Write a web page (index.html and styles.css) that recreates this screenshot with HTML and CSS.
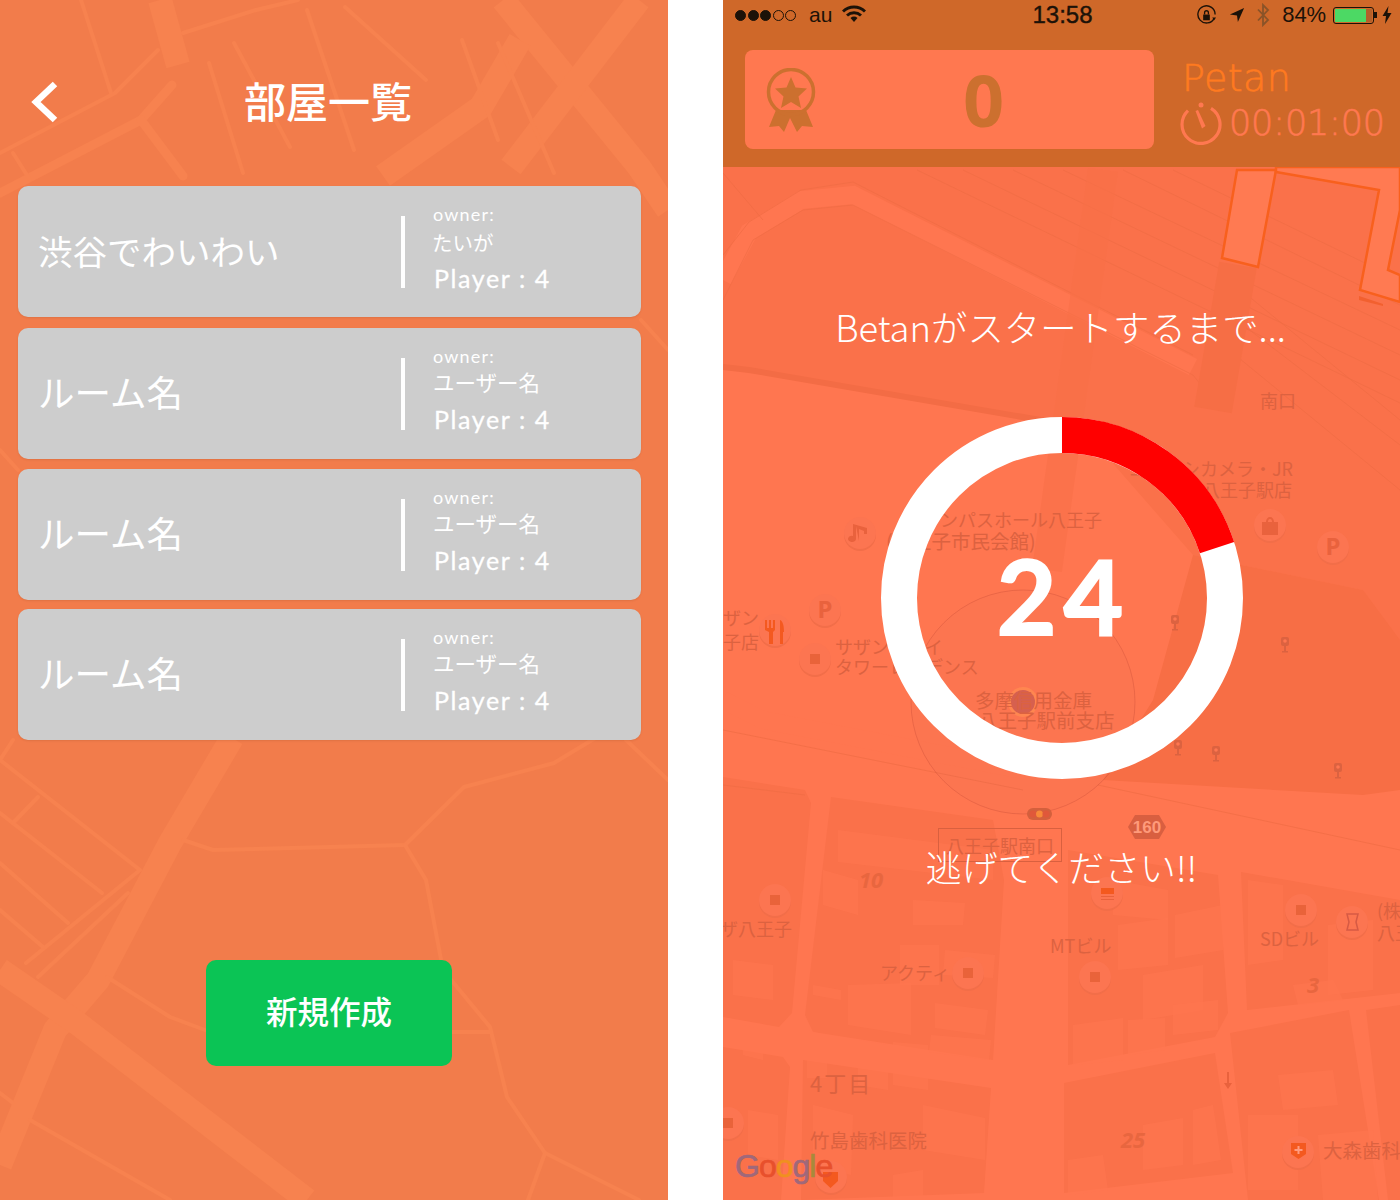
FILE: index.html
```html
<!DOCTYPE html>
<html lang="ja">
<head>
<meta charset="utf-8">
<title>Betan</title>
<link rel="stylesheet" href="styles.css">
</head>
<body>
<main class="screens">

<section class="rooms">
  <svg class="map" viewBox="0 0 668 1200" aria-hidden="true">
    <g class="road-wide">
      <path d="M160 0L178 65"/>
      <path d="M503 0L639 167L668 210"/>
      <path d="M639 0L511 167"/>
      <path d="M383 176L481 107L520 40"/>
      <path d="M232 738L170 843L98 980L55 1030L0 1165"/>
      <path d="M0 970L77 1023L307 1200"/>
    </g>
    <g class="road-mid">
      <path d="M0 193L141 120L172 85"/>
      <path d="M141 120L183 176"/>
    </g>
    <g class="road-thin">
      <path d="M0 153L115 93L158 50"/>
      <path d="M183 33L256 10L298 0"/>
      <path d="M81 0L111 93"/>
      <path d="M209 63L243 173"/>
      <path d="M234 43L290 147"/>
      <path d="M307 10L354 150"/>
      <path d="M345 7L426 80"/>
      <path d="M462 40L498 140"/>
      <path d="M498 43L554 173"/>
      <path d="M13 153L30 180"/>
      <path d="M641 320L668 350"/>
      <path d="M0 450L18 470"/>
      <path d="M13 740L0 760L140 870L26 963"/>
      <path d="M0 813L102 893"/>
      <path d="M0 863L68 923"/>
      <path d="M0 910L43 947"/>
      <path d="M128 893L38 977"/>
      <path d="M38 797L13 823"/>
      <path d="M183 840L213 850L405 845L464 787L554 763L597 737"/>
      <path d="M405 845L426 880L443 970L490 1027L507 1097L545 1153L639 1200"/>
      <path d="M545 1153L528 1200"/>
      <path d="M107 977L170 1017L205 1030"/>
      <path d="M452 1032L490 1032"/>
      <path d="M30 1120L170 1200"/>
      <path d="M0 1093L13 1103"/>
      <path d="M626 740L668 780"/>
    </g>
  </svg>

  <header class="rooms-head">
    <svg class="back" viewBox="0 0 30 44" aria-label="戻る"><path d="M25 4L6 22L25 40"/></svg>
    <h1 class="rooms-title">部屋一覧</h1>
  </header>

  <ul class="room-list">
    <li class="room">
      <span class="room-name room-name-long">渋谷でわいわい</span>
      <div class="room-info">
        <span class="owner">owner:</span>
        <span class="owner-name">たいが</span>
        <span class="players">Player : 4</span>
      </div>
    </li>
    <li class="room">
      <span class="room-name">ルーム名</span>
      <div class="room-info">
        <span class="owner">owner:</span>
        <span class="owner-name owner-name-wide">ユーザー名</span>
        <span class="players">Player : 4</span>
      </div>
    </li>
    <li class="room">
      <span class="room-name">ルーム名</span>
      <div class="room-info">
        <span class="owner">owner:</span>
        <span class="owner-name owner-name-wide">ユーザー名</span>
        <span class="players">Player : 4</span>
      </div>
    </li>
    <li class="room">
      <span class="room-name">ルーム名</span>
      <div class="room-info">
        <span class="owner">owner:</span>
        <span class="owner-name owner-name-wide">ユーザー名</span>
        <span class="players">Player : 4</span>
      </div>
    </li>
  </ul>

  <button class="create">新規作成</button>
</section>

<section class="game">
  <svg class="map" viewBox="0 0 677 1200" aria-hidden="true">
    <defs>
      <g id="stop"><rect x="-4" y="-7" width="8" height="9" rx="2"/><circle r="1.8" cy="-3" class="hole"/><rect x="-1" y="2" width="2" height="6"/><rect x="-3" y="7" width="6" height="1.5"/></g>
      <g id="pin"><circle r="16" cy="1" class="pin-shadow"/><circle r="16" class="pin-bg"/></g>
    </defs>

    <path class="block" d="M0 167H677V650L640 590L470 555L358 427L26 370L0 367Z"/>
    <path class="block-deep" d="M470 555L640 590L677 640V790L640 795L380 780L430 700Z"/>
    <path class="block" d="M0 777L82 790L88 803L69 1013L56 1027L0 1017Z"/>
    <path class="block" d="M108 797L270 820L281 880L270 1060L90 1032L82 1015Z"/>
    <path class="block" d="M345 850L495 875L505 1013L492 1037L345 1065Z"/>
    <path class="block" d="M518 872L677 900V993L524 1010Z"/>
    <path class="block" d="M80 1060L268 1088L261 1193L78 1200Z"/>
    <path class="block" d="M0 1047L60 1057L67 1067L58 1200H0Z"/>
    <path class="block" d="M341 1083L492 1053L510 1173L341 1193Z"/>
    <path class="block" d="M507 1033L626 1010L656 1200H525Z"/>
    <path class="block" d="M643 1010L677 1005V1200H665Z"/>

    <g class="bldg">
      <path d="M190 900L242 903L240 925L190 925Z"/><path d="M222 950L272 955L270 978L220 975Z"/>
      <path d="M177 945L216 945V985H177Z"/><path d="M125 985L188 983V1035L125 1025Z"/>
      <path d="M90 985L118 990V1000L90 995Z"/><path d="M84 1030L104 1035V1078H84Z"/>
      <path d="M135 1040L165 1045V1090L135 1085Z"/><path d="M170 1042L205 1045V1090L170 1085Z"/>
      <path d="M212 1003L265 1010L262 1035L212 1028Z"/><path d="M208 1035L268 1040L266 1060L206 1052Z"/>
      <path d="M115 830L270 850V880L115 862Z"/><path d="M100 870L135 880V915L100 905Z"/>
      <path d="M395 925L445 918V965L395 970Z"/><path d="M452 915L500 905V950L452 958Z"/>
      <path d="M420 975L480 965V1010L420 1020Z"/><path d="M350 1025L400 1018V1060L350 1065Z"/>
      <path d="M405 1020L442 1018V1050L405 1055Z"/><path d="M450 1005L495 1000V1030L450 1035Z"/>
      <path d="M390 880L445 890V920L390 915Z"/><path d="M525 880L560 885V960L525 965Z"/>
      <path d="M570 985L610 980L620 1000L575 1005Z"/><path d="M605 925L650 920V990L605 995Z"/>
      <path d="M10 960L50 965V1000L10 995Z"/><path d="M20 1025L40 1030V1060L20 1055Z"/>
      <path d="M25 1110L55 1115V1160L25 1155Z"/><path d="M200 1105L262 1118V1160L200 1150Z"/>
      <path d="M170 1175L200 1170V1200H170Z"/><path d="M90 1105L130 1115L128 1175L90 1165Z"/>
      <path d="M420 1125L460 1118V1165L420 1170Z"/><path d="M470 1110L490 1105L498 1160L470 1165Z"/>
      <path d="M345 1160L380 1155L385 1190L345 1195Z"/><path d="M555 1075L610 1070L615 1105L560 1110Z"/>
      <path d="M525 1115L575 1115V1190H525Z"/><path d="M595 1135L650 1130L655 1200H600Z"/>
    </g>

    <g class="road-light">
      <path d="M0 280L26 232L78 200L130 195L470 367"/>
      <path d="M0 700L40 720L300 770"/>
    </g>
    <g class="rail">
      <path d="M194 170L677 403"/><path d="M240 170L677 380"/><path d="M290 170L677 355"/>
      <path d="M340 170L677 330"/><path d="M400 170L677 305"/><path d="M450 170L677 280"/>
      <path d="M518 290L677 420"/><path d="M520 325L677 445"/><path d="M500 345L677 490"/>
      <path d="M0 173L40 220"/><path d="M0 300L30 240L80 210L130 205L470 375L490 400"/>
      <path d="M0 255L26 222L78 190L130 182L470 355"/>
      <path d="M0 730L300 790"/><path d="M0 785L82 795"/><path d="M375 785L677 850"/>
    </g>
    <path class="dark-line" d="M0 367L26 370L358 427"/>
    <path class="dark-band" d="M515 265L490 410"/>
    <path class="dark-band2" d="M380 170L324 570"/>

    <path class="platform" d="M514 170H553L535 267L499 258Z"/>
    <path class="platform" d="M553 172L656 190L637 290L677 302V275L665 270L677 210V167H553Z"/>
    <path class="platform-edge" d="M636 296L660 304V306L636 300Z"/>

    <circle class="accuracy" cx="300" cy="702" r="112"/>
    <circle class="me-halo" cx="300" cy="702" r="15"/>
    <circle class="me" cx="300" cy="702" r="12"/>

    <use href="#pin" x="137" y="533"/><use href="#pin" x="547" y="525"/><use href="#pin" x="610" y="547"/>
    <use href="#pin" x="102" y="610"/><use href="#pin" x="52" y="630"/><use href="#pin" x="92" y="659"/>
    <use href="#pin" x="52" y="900"/><use href="#pin" x="245" y="973"/><use href="#pin" x="372" y="977"/>
    <use href="#pin" x="578" y="910"/><use href="#pin" x="629" y="922"/><use href="#pin" x="5" y="1123"/>
    <use href="#pin" x="384" y="893"/><use href="#pin" x="108" y="1177"/><use href="#pin" x="575" y="1152"/>

    <g class="sq">
      <rect x="87" y="654" width="10" height="10"/><rect x="47" y="895" width="10" height="10"/>
      <rect x="240" y="968" width="10" height="10"/><rect x="367" y="972" width="10" height="10"/>
      <rect x="573" y="905" width="10" height="10"/><rect x="0" y="1118" width="10" height="10"/>
    </g>
    <g class="stops">
      <use href="#stop" x="452" y="622"/><use href="#stop" x="562" y="644"/><use href="#stop" x="455" y="747"/>
      <use href="#stop" x="493" y="753"/><use href="#stop" x="615" y="770"/>
    </g>

    <path class="glyph" d="M133 526L133 539A4 3 0 1 1 130 536V524L144 528V534H141V531L136 529V541Z"/>
    <path class="glyph-strong" d="M42 620h2v8h2v-8h2v8h2v-8h2v10l-2 2v12h-4v-12l-4-2ZM57 620c3 1 4 6 4 12h-1v12h-3Z"/>
    <path class="glyph" d="M539 522h4a4 5 0 0 1 8 0h4v13h-16ZM545 522h4a2 3 0 0 0 -4 0Z"/>
    <path class="glyph-strong" d="M378 888h13v6h-13Z"/>
    <path class="glyph" d="M378 896h13v1h-13ZM378 899h13v1h-13Z"/>
    <path class="glyph-line" d="M624 914h11l-2 8l2 8h-11l2-8Z"/>
    <path class="glyph-strong" d="M568 1143h15v11l-7.500 5l-7.500-5Z"/>
    <path class="glyph-white" d="M574.500 1146h2v3h3v2h-3v3h-2v-3h-3v-2h3Z"/>
    <path class="glyph-strong" d="M100 1172h15v9l-7.500 7l-7.500-7Z"/>
    <path class="glyph" d="M504 1072h2v11h3l-4 6l-4-6h3Z"/>
    <rect class="signal" x="304" y="808" width="25" height="12" rx="6"/>
    <circle class="signal-a" cx="310" cy="814" r="3.500"/><circle class="signal-b" cx="316.500" cy="814" r="3.500"/><circle class="signal-a" cx="323" cy="814" r="3.500"/>
    <path class="hex" d="M405 827L412 815H436L443 827L436 839H412Z"/>
    <rect class="sign" x="215.500" y="828.500" width="123" height="33"/>

    <g class="lbl">
      <text x="537" y="408">南口</text>
      <text x="570" y="476" text-anchor="end">ヨドバシカメラ・JR</text>
      <text x="569" y="497" text-anchor="end">八王子駅店</text>
      <text x="379" y="527" text-anchor="end">オリンパスホール八王子</text>
      <text class="lbl-lg" x="163" y="549">(八王子市民会館)</text>
      <text x="0" y="625">ザン</text>
      <text x="0" y="649">子店</text>
      <text x="112" y="654">サザンスカイ</text>
      <text x="112" y="674">タワーレジデンス</text>
      <text class="lbl-lg" x="252" y="708">多摩信用金庫</text>
      <text class="lbl-lg" x="255" y="728">八王子駅前支店</text>
      <text x="223" y="853">八王子駅南口</text>
      <text x="-3" y="936">ザ八王子</text>
      <text x="157" y="980">アクティ</text>
      <text x="327" y="953">MTビル</text>
      <text x="537" y="946">SDビル</text>
      <text x="654" y="918">(株</text>
      <text x="654" y="940">八王</text>
      <text class="lbl-lg" x="87" y="1148">竹島歯科医院</text>
      <text class="lbl-lg" x="600" y="1158">大森歯科</text>
      <text class="lbl-big" x="87" y="1092">4丁目</text>
      <text class="lbl-num" x="136" y="888">10</text>
      <text class="lbl-num" x="584" y="993">3</text>
      <text class="lbl-num" x="398" y="1148">25</text>
      <text class="lbl-hex" x="424" y="833" text-anchor="middle">160</text>
      <text class="lbl-p" x="102" y="618" text-anchor="middle">P</text>
      <text class="lbl-p" x="610" y="555" text-anchor="middle">P</text>
    </g>
    <text class="google" x="12" y="1177"><tspan class="g-a">G</tspan><tspan class="g-b">o</tspan><tspan class="g-c">o</tspan><tspan class="g-a">g</tspan><tspan class="g-d">l</tspan><tspan class="g-b">e</tspan></text>
  </svg>

  <div class="status">
    <div class="status-left">
      <span class="signal-dots"><i class="on"></i><i class="on"></i><i class="on"></i><i></i><i></i></span>
      <span class="carrier">au</span>
      <svg class="wifi" viewBox="0 0 24 18"><path d="M1 6.500A16 16 0 0 1 23 6.500M5 10.500A10.500 10.500 0 0 1 19 10.500"/><path class="wifi-dot" d="M8.500 13A5 5 0 0 1 15.500 13L12 17Z"/></svg>
    </div>
    <div class="clock">13:58</div>
    <div class="status-right">
      <svg class="ico-lock" viewBox="0 0 22 22"><path d="M19 14A9 9 0 1 1 20 10"/><path class="solid" d="M7.500 10h7v6h-7Z"/><path d="M9 10V8a2 2 0 0 1 4 0v2"/><path class="solid" d="M17 13l4 0l-2 3Z"/></svg>
      <svg class="ico-loc" viewBox="0 0 18 18"><path d="M17 1L1 8.500L9 9.500L10 17Z"/></svg>
      <svg class="ico-bt" viewBox="0 0 14 24"><path d="M2 6.500L12 17L7 22V2L12 7L2 17.500"/></svg>
      <span class="pct">84%</span>
      <span class="battery"><span class="battery-fill"></span></span>
      <svg class="ico-bolt" viewBox="0 0 10 18"><path d="M6.500 0L0.500 10H4L3 18L9.500 7H5.500Z"/></svg>
    </div>
  </div>

  <header class="game-head">
    <div class="score">
      <svg class="medal" viewBox="0 0 50 64">
        <path class="medal-rib" d="M10 42L3 59L13 58L18 64L24 50L31 64L36 58L47 59L40 42Z"/>
        <ellipse class="medal-ring" cx="25" cy="24" rx="22.500" ry="22.500"/>
        <path class="medal-star" d="M25 9L29.500 19.500L41 20.500L32.500 28.500L35 40L25 34L15 40L17.500 28.500L9 20.500L20.500 19.500Z"/>
      </svg>
      <span class="score-value">0</span>
    </div>
    <div class="player">
      <div class="player-name">Petan</div>
      <div class="timer">
        <svg class="stopwatch" viewBox="0 0 42 46"><path class="sw-arc" d="M8 11.600A19 19 0 1 0 31 9.300"/><circle class="sw-hand" cx="21" cy="6" r="2.500"/><path class="sw-hand" d="M15.500 12L18 11L25.500 27L22 29.500Z"/></svg>
        <span class="time">00:01:00</span>
      </div>
    </div>
  </header>

  <div class="countdown">
    <p class="wait">Betanがスタートするまで...</p>
    <div class="ring">
      <svg class="ring-svg" viewBox="0 0 362 362">
        <circle class="ring-track" cx="181" cy="181" r="163"/>
        <path class="ring-used" d="M181 18A163 163 0 0 1 336 130.600"/>
      </svg>
      <span class="ring-num">24</span>
    </div>
    <p class="run">逃げてください!!</p>
  </div>
</section>

</main>
</body>
</html>
```
FILE: styles.css
```css
* { box-sizing: border-box; }
html, body { margin: 0; padding: 0; background: #fff; }
body { width: 1400px; height: 1200px; overflow: hidden; font-family: "Noto Sans CJK JP", "Noto Sans", sans-serif; }
p, h1, ul { margin: 0; padding: 0; }
.screens { display: flex; gap: 55px; width: 1400px; height: 1200px; }
.map { position: absolute; inset: 0; width: 100%; height: 100%; display: block; }

/* left screen */
.rooms { position: relative; width: 668px; height: 1200px; background: #f27c4b; overflow: hidden; }
.road-wide path, .road-mid path, .road-thin path { fill: none; stroke: #f7824f; stroke-linejoin: round; stroke-linecap: round; }
.road-wide path { stroke-width: 24px; stroke-linecap: butt; }
.road-mid path { stroke-width: 9px; }
.road-thin path { stroke-width: 4px; }

.rooms-head { position: relative; display: grid; grid-template-columns: 1fr auto 1fr; align-items: center; height: 186px; padding: 14px 42px 0 30px; }
.back { width: 30px; height: 44px; margin-top: 4px; }
.back path { fill: none; stroke: #fff; stroke-width: 6.500px; }
.rooms-title { font-size: 42px; font-weight: 500; color: #fff; line-height: 50px; white-space: nowrap; }

.room-list { position: relative; list-style: none; margin-left: 18px; width: 623px; }
.room { display: flex; align-items: center; height: 131px; padding-left: 20px; background: #cdcdcd; border-radius: 10px; box-shadow: 0 1px 2px rgba(120,60,30,.15); margin-bottom: 10px; }
.room:first-child { margin-bottom: 11px; }
.room:nth-child(3) { margin-bottom: 9px; }
.room:last-child { margin-bottom: 0; }
.room-name { width: 363px; flex: none; font-size: 36.500px; font-weight: 400; color: #fff; line-height: 44px; margin-top: -3px; }
.room-name-long { font-size: 34.500px; }
.room-info { display: flex; flex-direction: column; height: 72px; padding-left: 28px; border-left: 4px solid #fff; color: #fff; position: relative; }
.owner { font-size: 18px; line-height: 20px; margin-top: -12px; font-family: "Lato", "Noto Sans CJK JP", sans-serif; letter-spacing: 1.200px; }
.owner-name { font-size: 20.500px; line-height: 28px; margin-top: 4px; margin-left: -1px; }
.owner-name-wide { font-size: 21.500px; margin-left: 0; margin-top: 2px; margin-bottom: 1px; }
.players { font-size: 25px; line-height: 30px; margin-top: 7.500px; margin-left: 1px; font-family: "Lato", "Noto Sans CJK JP", sans-serif; letter-spacing: 1.600px; -webkit-text-stroke: .3px #fff; }

.create { position: relative; display: block; width: 246px; height: 106px; padding: 0 0 6px; margin: 220px 0 0 206px; border: 0; border-radius: 10px; background: #0bc455; color: #fff; font: 500 31.500px "Noto Sans CJK JP", sans-serif; }

/* right screen */
.game { position: relative; width: 677px; height: 1200px; background: #ff7650; overflow: hidden; }
.block { fill: #fa714a; }
.block-deep { fill: #f76e45; }
.bldg path { fill: #ff7650; opacity: .6; }
.road-light path { fill: none; stroke: #ff7650; stroke-width: 18px; }
.rail path { fill: none; stroke: #f06c44; stroke-width: 1px; opacity: .7; }
.dark-line { fill: none; stroke: #f36c45; stroke-width: 6px; }
.dark-band { fill: none; stroke: #f66e45; stroke-width: 38px; }
.dark-band2 { fill: none; stroke: #f96f48; stroke-width: 30px; opacity: .6; }
.platform { fill: #ff7a52; stroke: #f8601d; stroke-width: 2.500px; }
.platform-edge { fill: #f2602f; }
.accuracy { fill: rgba(190,90,90,.05); stroke: rgba(190,70,50,.3); stroke-width: 1px; }
.me-halo { fill: #ff8650; }
.me { fill: #d6604f; }
.pin-bg { fill: #fc7551; }
.pin-shadow { fill: #f26e49; transform: translateY(1px); }
.sq rect { fill: #e9633a; }
.stops use { fill: #dc6240; }
.hole { fill: #ff7650; }
.glyph { fill: #e9623d; }
.glyph-strong { fill: #f4591f; }
.glyph-white { fill: #ff9b80; }
.glyph-line { fill: none; stroke: #d65a44; stroke-width: 1.500px; }
.signal { fill: #d4603d; }
.signal-a { fill: #e0583a; }
.signal-b { fill: #f88a3a; }
.hex { fill: #d95f40; }
.sign { fill: none; stroke: #d9603f; stroke-width: 1px; }
.lbl text { font: 400 18px "Noto Sans CJK JP", sans-serif; fill: #dc6240; }
.lbl .lbl-lg { font-size: 19.500px; }
.lbl .lbl-big { font-size: 22px; letter-spacing: 2px; }
.lbl .lbl-num { font: italic 700 22px "Noto Sans", sans-serif; fill: #e8663f; }
.lbl .lbl-hex { font: 700 17px "Liberation Sans", sans-serif; fill: #ff9a7a; }
.lbl .lbl-p { font: 700 24px "Noto Sans", sans-serif; fill: #e9623d; }
.google { font: 400 32px "Liberation Sans", sans-serif; letter-spacing: -1px; stroke-width: .7px; }
.g-a { fill: #a0687a; stroke: #a0687a; }
.g-b { fill: #e8502c; stroke: #e8502c; }
.g-c { fill: #f0901f; stroke: #f0901f; }
.g-d { fill: #a88a3a; stroke: #a88a3a; }

.status { position: relative; display: grid; grid-template-columns: 1fr auto 1fr; align-items: center; height: 30px; padding: 0 8px 0 12px; background: #cf6829; color: #1c1208; font-family: "Liberation Sans", sans-serif; font-size: 22px; }
.status-left { display: flex; align-items: center; }
.signal-dots { display: flex; gap: 1.500px; width: 74px; }
.signal-dots i { width: 11px; height: 11px; border-radius: 50%; border: 1px solid #1c1208; }
.signal-dots i.on { background: #1c1208; }
.carrier { font-size: 21px; }
.wifi { width: 24px; height: 18px; margin-left: 10px; margin-top: -3px; }
.wifi path { fill: none; stroke: #1c1208; stroke-width: 3px; }
.wifi .wifi-dot { fill: #1c1208; stroke: none; }
.clock { font-weight: 400; font-size: 24px; -webkit-text-stroke: .4px #1c1208; transform: translateX(-1px); }
.status-right { display: flex; align-items: center; justify-content: flex-end; }
.ico-lock { width: 21px; height: 21px; margin-right: 12px; }
.ico-lock path { fill: none; stroke: #1c1208; stroke-width: 1.400px; }
.ico-lock .solid { fill: #1c1208; stroke: none; }
.ico-loc { width: 16px; height: 16px; margin-right: 11px; }
.ico-loc path { fill: #1c1208; }
.ico-bt { width: 14px; height: 24px; margin-right: 12px; }
.ico-bt path { fill: none; stroke: #8a5328; stroke-width: 1.800px; }
.pct { margin-right: 7px; letter-spacing: -.1px; }
.battery { position: relative; display: block; width: 41px; height: 17px; border: 1.500px solid #1c1208; border-radius: 3px; padding: 1px; background: #b4602a; background-clip: content-box; }
.battery::after { content: ""; position: absolute; left: 40px; top: 4px; width: 3px; height: 6px; background: #1c1208; }
.battery-fill { display: block; width: 31px; height: 100%; background: #4cd964; }
.ico-bolt { width: 10px; height: 18px; margin-left: 8px; }
.ico-bolt path { fill: #1c1208; }

.game-head { position: relative; display: flex; align-items: flex-start; height: 137px; padding: 20px 0 0 22px; background: #cf6829; }
.score { display: flex; align-items: center; width: 409px; height: 99px; padding-left: 21px; background: #ff7850; border-radius: 8px; }
.medal { width: 50px; height: 64px; flex: none; }
.medal-rib, .medal-star { fill: #cc702f; }
.medal-ring { fill: none; stroke: #cc702f; stroke-width: 3.500px; }
.score-value { font: 700 72px "Open Sans", sans-serif; color: #cc702f; margin-left: 147px; line-height: 99px; }
.player { margin-left: 28px; }
.player-name { font: 200 38px "DejaVu Sans", sans-serif; -webkit-text-stroke: .6px #ff7a20; color: #ff7a20; line-height: 44px; margin-top: 6px; letter-spacing: .4px; }
.timer { display: flex; align-items: center; margin-left: -2px; margin-top: -1px; }
.stopwatch { width: 42px; height: 46px; flex: none; }
.sw-arc { fill: none; stroke: #ff7850; stroke-width: 3.200px; }
.sw-hand { fill: #ff7850; }
.time { font: 200 35px "DejaVu Sans", sans-serif; -webkit-text-stroke: .6px #ff7850; color: #ff7850; margin-left: 7px; line-height: 44px; letter-spacing: -.15px; margin-top: 2px; }

.countdown { position: absolute; left: 0; top: 167px; width: 677px; display: flex; flex-direction: column; align-items: center; color: #fff; }
.wait { font-size: 36.400px; font-weight: 300; line-height: 50px; margin-top: 134px; white-space: nowrap; transform: translateX(-1px); }
.ring { position: relative; width: 362px; height: 362px; margin-top: 66px; }
.ring-svg { display: block; width: 362px; height: 362px; }
.ring-track { fill: none; stroke: #fff; stroke-width: 36px; }
.ring-used { fill: none; stroke: #f00; stroke-width: 36px; }
.ring-num { position: absolute; left: 0; right: 0; top: -3px; text-align: center; font: 700 103px/362px "Lato", sans-serif; letter-spacing: 7px; -webkit-text-stroke: 2px #fff; color: #fff; transform: translateX(2px); }
.run { font-size: 35.900px; font-weight: 300; line-height: 50px; margin-top: 62px; white-space: nowrap; }
```
